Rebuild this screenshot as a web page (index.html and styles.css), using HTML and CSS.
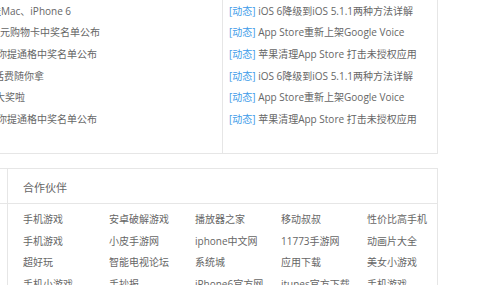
FILE: index.html
```html
<!doctype html>
<html lang="zh-CN">
<head>
  <meta charset="UTF-8">
  <title>合作伙伴</title>
  <link rel="stylesheet" href="styles.css">
</head>
<body>
  <div class="wrap">
    <div class="top">
      <div class="col-left">
        <ul class="news">
          <li class="cut1"><a href="javascript:;">送Mac、iPhone 6</a></li>
          <li><a href="javascript:;">元购物卡中奖名单公布</a></li>
          <li class="cut3"><a href="javascript:;">你提通格中奖名单公布</a></li>
          <li class="cut6"><a href="javascript:;">话费随你拿</a></li>
          <li class="cut5"><a href="javascript:;">大奖啦</a></li>
          <li class="cut3"><a href="javascript:;">你提通格中奖名单公布</a></li>
        </ul>
      </div>
      <div class="col-right">
        <ul class="news">
          <li><span class="tag">[动态]</span> <a href="javascript:;">iOS 6降级到iOS 5.1.1两种方法详解</a></li>
          <li><span class="tag">[动态]</span> <a href="javascript:;">App Store重新上架Google Voice</a></li>
          <li><span class="tag">[动态]</span> <a href="javascript:;">苹果清理App Store 打击未授权应用</a></li>
          <li><span class="tag">[动态]</span> <a href="javascript:;">iOS 6降级到iOS 5.1.1两种方法详解</a></li>
          <li><span class="tag">[动态]</span> <a href="javascript:;">App Store重新上架Google Voice</a></li>
          <li><span class="tag">[动态]</span> <a href="javascript:;">苹果清理App Store 打击未授权应用</a></li>
        </ul>
      </div>
    </div>

    <div class="partner">
      <div class="partner-side">
        <div class="side-head"></div>
      </div>
      <div class="partner-main">
        <h3 class="partner-title">合作伙伴</h3>
        <ul class="links">
          <li><a href="javascript:;">手机游戏</a></li>
          <li><a href="javascript:;">安卓破解游戏</a></li>
          <li><a href="javascript:;">播放器之家</a></li>
          <li><a href="javascript:;">移动叔叔</a></li>
          <li><a href="javascript:;">性价比高手机</a></li>
          <li><a href="javascript:;">手机游戏</a></li>
          <li><a href="javascript:;">小皮手游网</a></li>
          <li><a href="javascript:;">iphone中文网</a></li>
          <li><a href="javascript:;">11773手游网</a></li>
          <li><a href="javascript:;">动画片大全</a></li>
          <li><a href="javascript:;">超好玩</a></li>
          <li><a href="javascript:;">智能电视论坛</a></li>
          <li><a href="javascript:;">系统城</a></li>
          <li><a href="javascript:;">应用下载</a></li>
          <li><a href="javascript:;">美女小游戏</a></li>
          <li><a href="javascript:;">手机小游戏</a></li>
          <li><a href="javascript:;">手抄报</a></li>
          <li><a href="javascript:;">iPhone6官方网</a></li>
          <li><a href="javascript:;">itunes官方下载</a></li>
          <li><a href="javascript:;">手机游戏</a></li>
        </ul>
      </div>
    </div>
  </div>
</body>
</html>
```

FILE: styles.css
```css
body,ul,li,h3{ margin:0; padding:0;}
ul,li{list-style:none;}
body{font-family:"Open Sans","Noto Sans CJK SC",sans-serif; font-size:10px; color:#666; background:#fff; overflow:hidden;}
a{color:#666; text-decoration:none;}

.wrap{width:458px; margin-left:-20px; margin-top:-11px;}

/* 上方两栏新闻 */
.top{display:flex; border:1px solid #e6e6e6;}
.col-left{width:222px; flex-shrink:0; border-right:1px solid #e6e6e6; padding-left:19px; overflow:hidden;}
.col-right{flex:1; padding-left:6px; white-space:nowrap;}
.news{padding:10.8px 0 22.6px;}
.news li{height:21.6px; line-height:21.6px; white-space:nowrap;}
.news .tag{color:#3d9be9;}
.cut1{text-indent:-9px;}
.cut3{text-indent:-3px;}
.cut5{text-indent:-5px;}
.cut6{text-indent:-6px;}

/* 合作伙伴 */
.partner{display:flex; margin-top:14px; border:1px solid #e6e6e6; border-bottom:0;}
.partner-side{width:26px; flex-shrink:0; border-right:1px solid #e6e6e6;}
.side-head{height:34px; border-bottom:1px solid #e6e6e6;}
.partner-main{flex:1; min-width:0;}
.partner-title{height:30px; line-height:30px; padding:4px 0 0 15px; font-size:11px; font-weight:normal; color:#666; border-bottom:1px solid #e6e6e6;}
.links{display:grid; grid-template-columns:repeat(5,86px); padding:5px 0 0 15px;}
.links li{height:21.6px; line-height:21.6px; white-space:nowrap;}
```
